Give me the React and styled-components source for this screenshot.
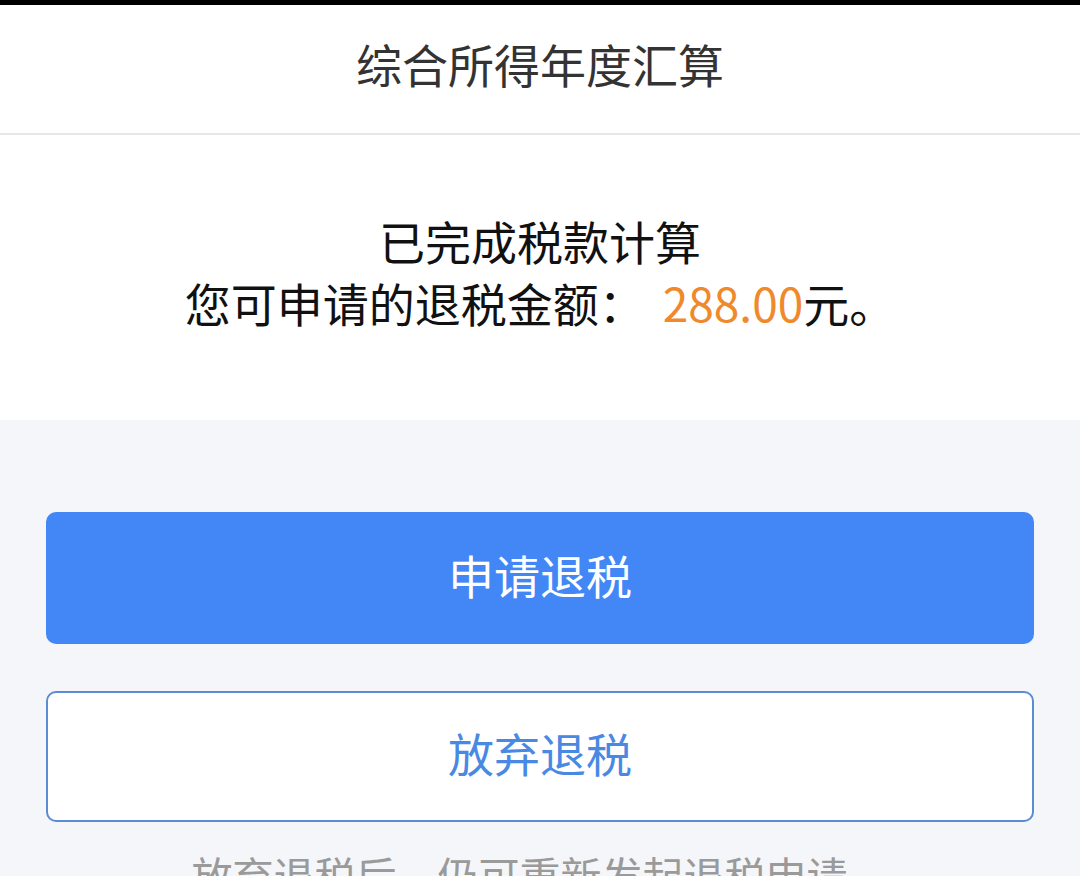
import React from 'react';
import styled, { createGlobalStyle } from 'styled-components';

const GlobalStyle = createGlobalStyle`
  html, body {
    margin: 0;
    padding: 0;
    height: 876px;
    overflow: hidden;
    background: #f5f6f9;
    font-family: "Noto Sans CJK SC", "Noto Sans", sans-serif;
  }
`;

const Page = styled.div`
  display: flex;
  flex-direction: column;
  width: 1080px;
  min-height: 876px;
  background: #f5f6f9;
`;

const StatusStrip = styled.div`
  height: 5px;
  background: #000;
`;

const Header = styled.header`
  height: 130px;
  box-sizing: border-box;
  padding-bottom: 12px;
  display: flex;
  align-items: center;
  justify-content: center;
  background: #fff;
  border-bottom: 2px solid #e6e6e6;
`;

const Title = styled.h1`
  margin: 0;
  font-size: 46px;
  font-weight: 400;
  color: #333;
`;

const Result = styled.section`
  background: #fff;
  padding: 74px 0 87px;
  text-align: center;
  color: #111;
  font-size: 46px;
  line-height: 62px;
`;

const Amount = styled.span`
  color: #f0892c;
  margin-left: 18px;
`;

const Actions = styled.div`
  display: flex;
  flex-direction: column;
  gap: 47px;
  padding: 92px 46px 0;
`;

const Button = styled.button`
  height: ${(p) => (p.$outline ? '131px' : '132px')};
  box-sizing: border-box;
  padding: 0 0 9px;
  border-radius: 10px;
  border: ${(p) => (p.$outline ? '2px solid #5b8cd3' : 'none')};
  background: ${(p) => (p.$outline ? '#fff' : '#4287f5')};
  color: ${(p) => (p.$outline ? '#4a89e3' : '#fff')};
  font-family: inherit;
  font-size: 46px;
  cursor: pointer;
`;

const Hint = styled.p`
  margin: 24px 0 0;
  text-align: center;
  font-size: 41px;
  line-height: 57px;
  color: #9a9a9a;
`;

const App = () => {
  return (
    <>
      <GlobalStyle />
      <Page>
        <StatusStrip />
        <Header>
          <Title>综合所得年度汇算</Title>
        </Header>
        <Result>
          <div>已完成税款计算</div>
          <div>
            您可申请的退税金额：<Amount>288.00</Amount>元。
          </div>
        </Result>
        <Actions>
          <Button>申请退税</Button>
          <Button $outline>放弃退税</Button>
        </Actions>
        <Hint>放弃退税后，仍可重新发起退税申请。</Hint>
      </Page>
    </>
  );
};

export default App;
